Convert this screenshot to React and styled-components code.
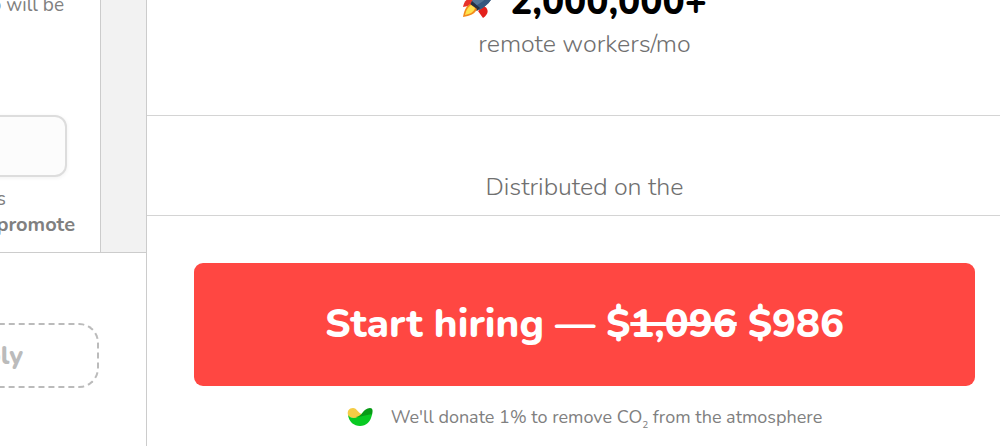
import styled, { createGlobalStyle } from "styled-components";

export default function App() {
    return (
        <>
            <GlobalStyle />
            <Page>
                <Sidebar>
                    <Backdrop>
                        <Card>
                            <Hint $end={36}>o will be</Hint>
                            <CompanyInput type="text" aria-label="Company" />
                            <Hint $end={94}>s</Hint>
                            <Hint $end={25}><b>promote</b></Hint>
                        </Card>
                    </Backdrop>
                    <ApplyArea>
                        <ApplyButton type="button">ply</ApplyButton>
                    </ApplyArea>
                </Sidebar>

                <Main>
                    <Stats>
                        <StatNumber>
                            <Rocket />
                            2,000,000+
                        </StatNumber>
                        <Caption>remote workers/mo</Caption>
                    </Stats>
                    <Distributed>
                        <Caption>Distributed on the</Caption>
                    </Distributed>
                    <Checkout>
                        <HireButton type="button">
                            Start hiring — $<s>1,096</s> $986
                        </HireButton>
                        <Climate>
                            <ClimateLogo />
                            <span>We'll donate 1% to remove CO<sub>2</sub> from the atmosphere</span>
                        </Climate>
                    </Checkout>
                </Main>
            </Page>
        </>
    )
}

function Rocket() {
    return (
        <svg width="34" height="34" viewBox="0 0 34 34" aria-hidden="true">
            <path d="M12 13C6 12 2 16 1 22l10-2z" fill="#e8322a" />
            <path d="M22 21c5 3 5 8-1 12l-5-7z" fill="#e3201b" />
            <path d="M33 1C22 1 14 7 9 18l8 7C27 20 33 12 33 1z" fill="#547596" />
            <path d="M33 1c0 11-6 19-16 24l-4-4C22 17 28 10 33 1z" fill="#35577f" />
            <path d="M10 16l8 7-3 3-7-6z" fill="#253044" />
            <path d="M8 19c-4 2-6 7-7 13 7-1 12-3 14-8z" fill="#f28b1c" />
            <path d="M9 20c-4 3-5 6-6 10 5-1 9-3 10-7z" fill="#ffe34d" />
            <circle cx="23" cy="11" r="3" fill="#b9dff2" />
        </svg>
    )
}

function ClimateLogo() {
    return (
        <svg width="26" height="18" viewBox="0 0 26 18" aria-hidden="true">
            <path d="M1 7C0 3 2 0 6 0c4 0 5 5 9 6l-5 5-8-2z" fill="#f5cc45" />
            <path d="M9 9c6 0 7-9 14-9 3 0 3 3 2 7l-9 5z" fill="#079b16" />
            <path d="M1 7c2 3 6 4 10 2 5-1 9-2 14-3-1 8-6 12-12 12C7 18 2 14 1 7z" fill="#08ca22" />
        </svg>
    )
}

const GlobalStyle = createGlobalStyle`
* {
  box-sizing: border-box;
}
body {
  margin: 0;
  background: #ffffff;
  color: #808080;
  font-family: Nunito, Lato, sans-serif;
}
button, input {
  font-family: inherit;
}
`
const Page = styled.div`
display: flex;
height: 100vh;
overflow: hidden;
`
const Sidebar = styled.aside`
flex: 0 0 147px;
border-right: 1px solid #cccccc;
overflow: hidden;
`
const Backdrop = styled.div`
padding-right: 45px;
background: #f2f2f2;
border-bottom: 1px solid #cccccc;
`
const Card = styled.div`
display: flex;
flex-direction: column;
align-items: flex-end;
padding-bottom: 14px;
background: #ffffff;
border-right: 1px solid #cccccc;
overflow: hidden;
`
const Hint = styled.div`
margin-right: ${({ $end }) => $end}px;
font-size: 19px;
line-height: 26px;
white-space: nowrap;

&:first-child {
  margin-top: -8px;
}

b {
  font-size: 20px;
  font-weight: 700;
}
`
const CompanyInput = styled.input`
width: 120px;
height: 62px;
margin: 97px 33px 9px 0;
padding: 0 16px;
background: #fcfcfc;
border: 2px solid #dddddd;
border-radius: 12px;
box-shadow: 0 1px 4px rgba(0, 0, 0, 0.06);
`
const ApplyArea = styled.div`
display: flex;
justify-content: flex-end;
padding: 70px 47px 0 0;
`
const ApplyButton = styled.button`
flex: 0 0 160px;
height: 65px;
padding: 0 74px 0 0;
text-align: right;
font-size: 26px;
font-weight: 800;
color: #bbbbbb;
background: transparent;
border: 2px dashed #bbbbbb;
border-radius: 20px;
`
const Main = styled.main`
flex: 1;
min-width: 0;
text-align: center;
`
const Section = styled.section`
padding: 0 25px 0 47px;
border-bottom: 1px solid #d4d4d4;
`
const Stats = styled(Section)`
display: flex;
flex-direction: column;
justify-content: flex-end;
height: 116px;
padding-bottom: 54px;
overflow: hidden;
`
const StatNumber = styled.div`
display: flex;
justify-content: center;
align-items: center;
gap: 14px;
font-size: 37px;
font-weight: 800;
line-height: 50px;
color: #000000;
`
const Caption = styled.div`
font-size: 25px;
font-weight: 300;
line-height: 34px;
color: #707070;
`
const Distributed = styled(Section)`
padding-top: 54px;
padding-bottom: 11px;
`
const Checkout = styled(Section)`
padding-top: 47px;
border-bottom: none;
`
const HireButton = styled.button`
width: 100%;
padding: 36px 16px;
font-size: 40px;
font-weight: 800;
line-height: 51px;
color: #ffffff;
background: #ff4742;
border: none;
border-radius: 9px;
`
const Climate = styled.div`
display: flex;
justify-content: center;
align-items: center;
gap: 18px;
margin-top: 18px;
font-size: 18px;
line-height: 26px;

sub {
  font-size: 10px;
  line-height: 0;
}
`
